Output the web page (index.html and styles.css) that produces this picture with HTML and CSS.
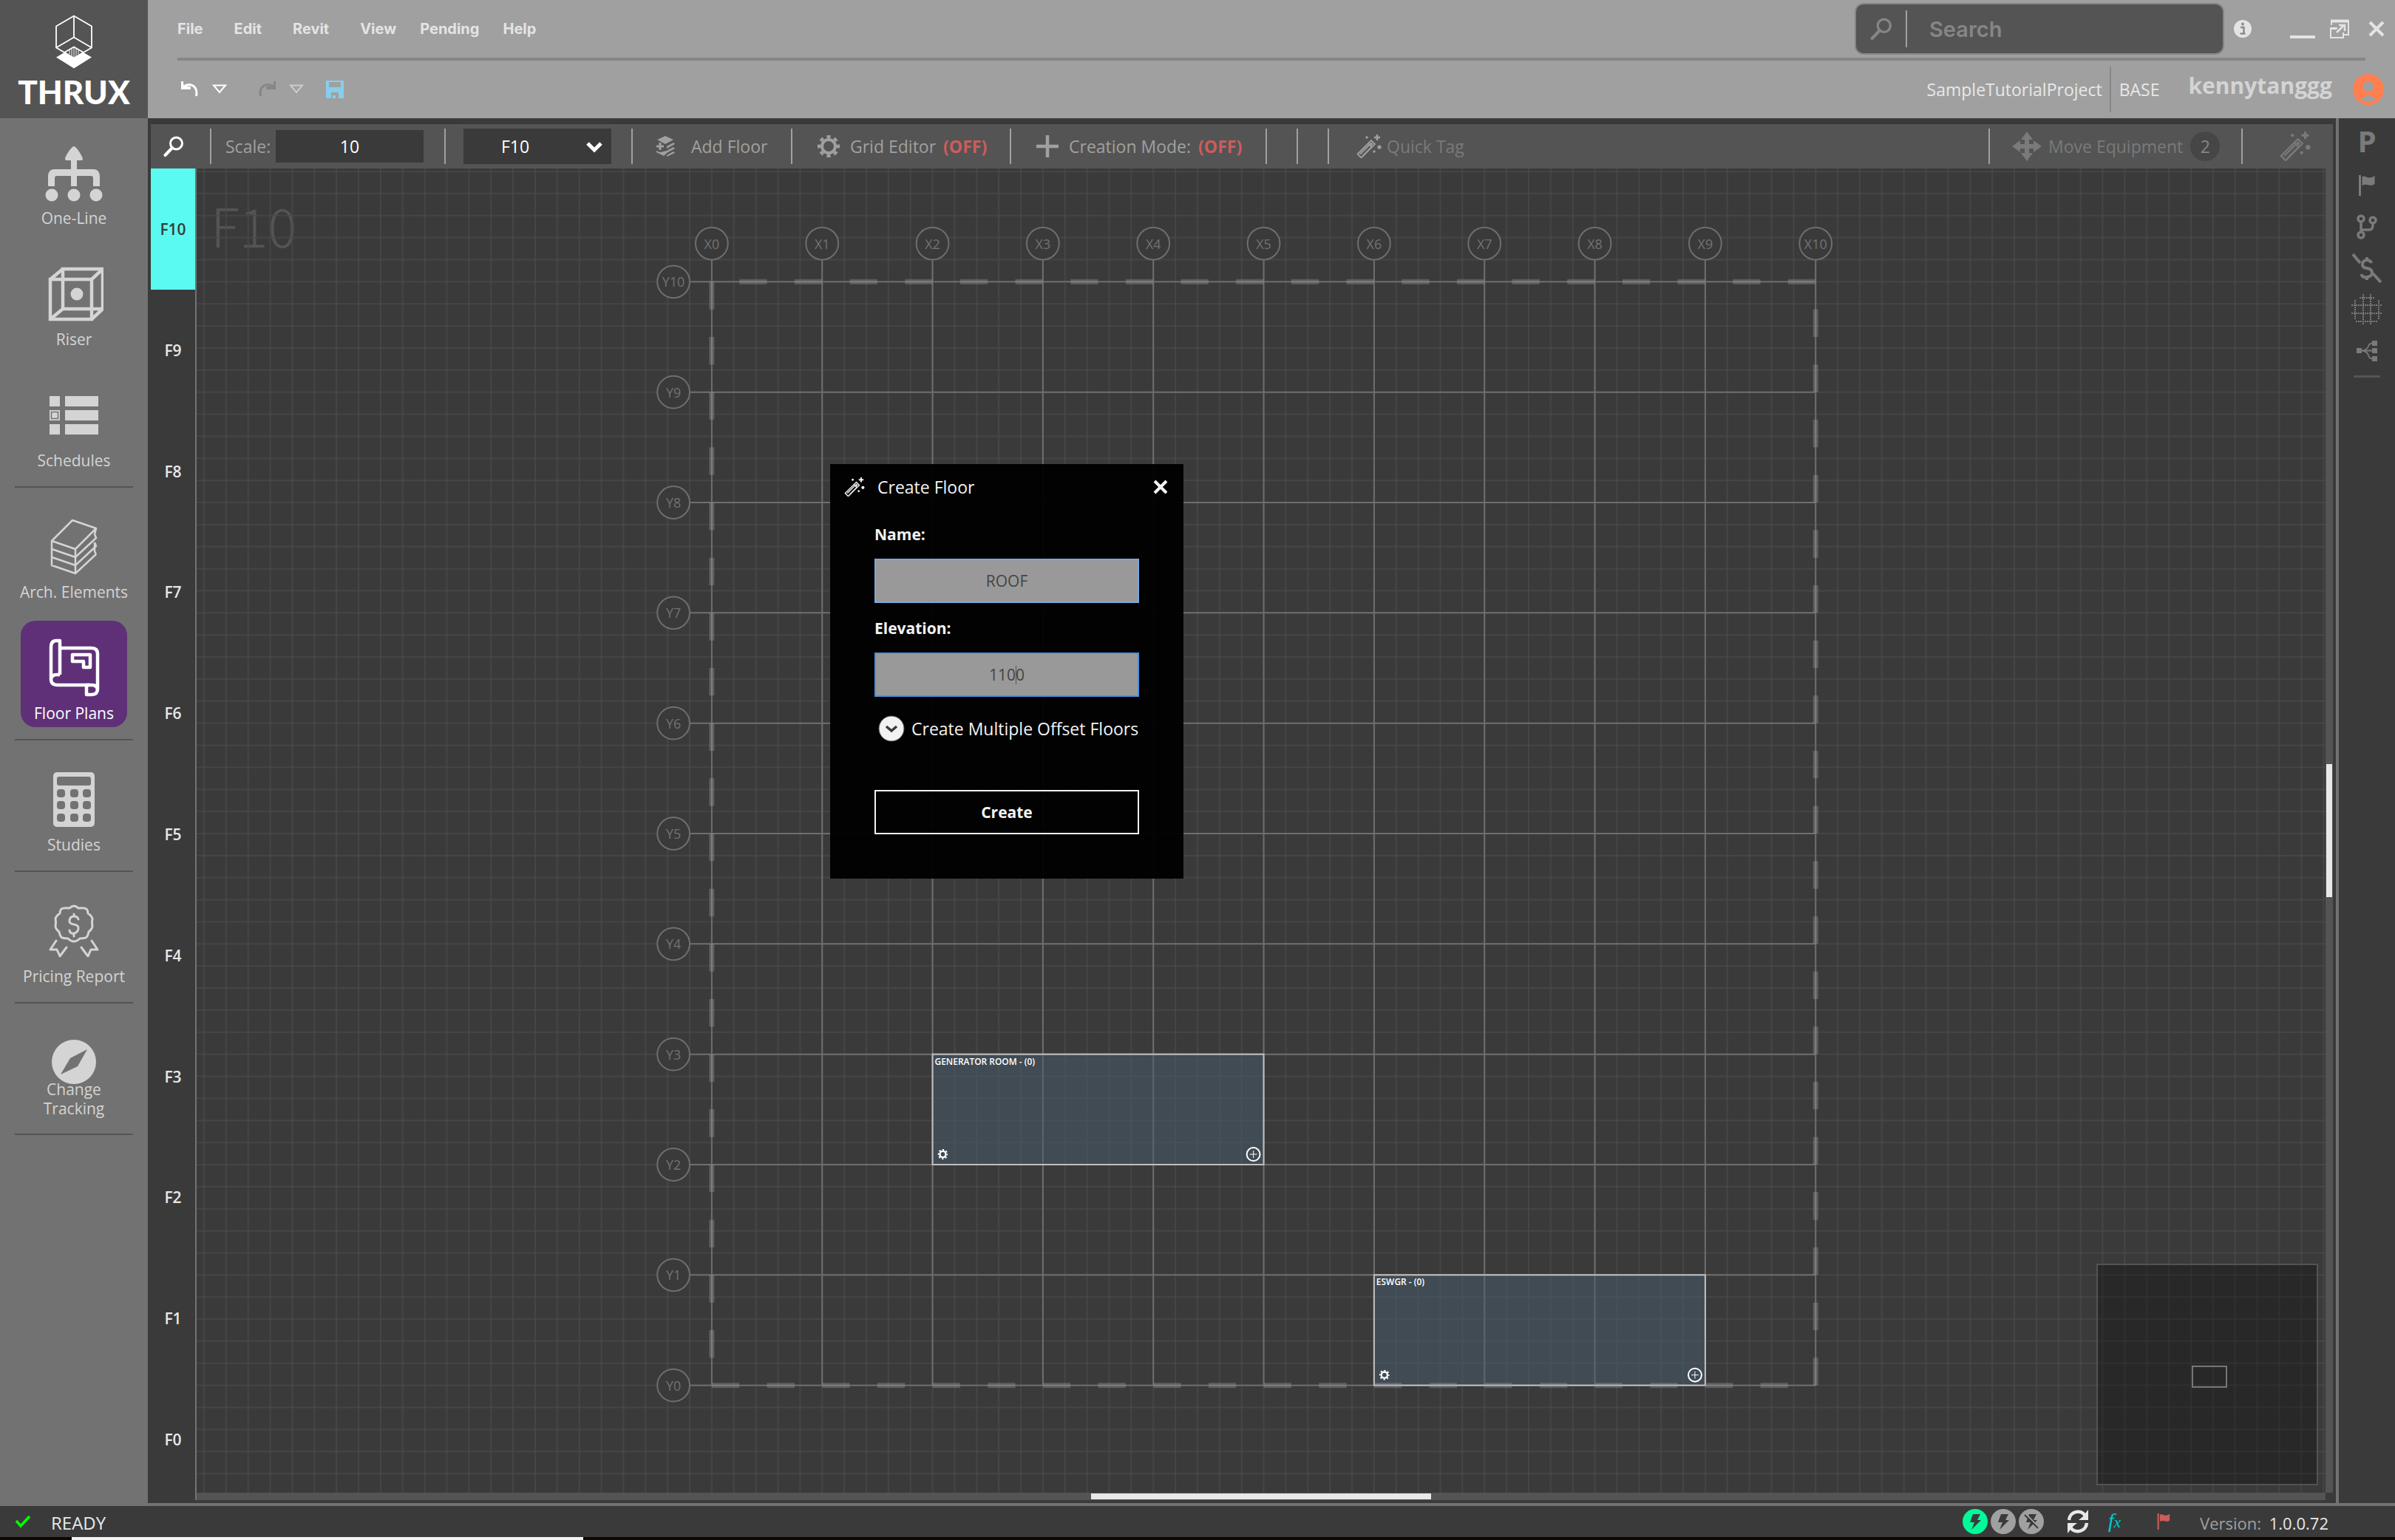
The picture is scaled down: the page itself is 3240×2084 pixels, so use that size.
FILE: index.html
```html
<!DOCTYPE html>
<html lang="en">
<head>
<meta charset="utf-8">
<title>THRUX - Floor Plans</title>
<link rel="stylesheet" href="styles.css">
</head>
<body>
<svg class="defs" aria-hidden="true">
  <symbol id="i-wand" viewBox="0 0 34 32">
    <path d="M1.500 26.500 20 8l5 5L6.500 31.500z M5 26.500 17 14.500M8.500 29 20.500 17M16 12l5 5" fill="none" stroke="currentColor" stroke-width="1.800"/>
    <path d="M19 11.500l2.500 2.500" stroke="currentColor" stroke-width="3"/>
    <path d="M28 0v8M24 4h8" stroke="currentColor" stroke-width="2.600"/>
    <circle cx="14" cy="4" r="1.700" fill="currentColor"/><circle cx="31" cy="17" r="2.600" fill="currentColor"/><circle cx="24" cy="23" r="1.700" fill="currentColor"/>
  </symbol>
  <symbol id="i-search" viewBox="0 0 28 28">
    <circle cx="17.500" cy="10" r="8" fill="none" stroke="currentColor" stroke-width="3"/>
    <path d="M12 16 2.500 26" stroke="currentColor" stroke-width="4" stroke-linecap="round"/>
  </symbol>
  <symbol id="i-gear" viewBox="0 0 30 30">
    <circle cx="15" cy="15" r="9" fill="none" stroke="currentColor" stroke-width="4"/>
    <circle cx="15" cy="15" r="13" fill="none" stroke="currentColor" stroke-width="4" pathLength="16" stroke-dasharray="1" stroke-dashoffset="0.500"/>
  </symbol>
  <symbol id="i-undo" viewBox="0 0 24 22">
    <path d="M3 7.500C12 1 23 6 20.500 20" fill="none" stroke="currentColor" stroke-width="3"/>
    <path d="M0 0l3 0 0.500 6.500 9.500 0.500v4L0 11z" fill="currentColor"/>
  </symbol>
  <symbol id="i-flag" viewBox="0 0 22 28">
    <path d="M1.500 0v28" stroke="currentColor" stroke-width="3"/>
    <path d="M4.500 2c4-2 7 2 10 1.500 3 0 5-1.500 7-2.500v11c-3 2-5 2.500-8 1.500s-5-1.500-9 .5z" fill="currentColor"/>
  </symbol>
  <symbol id="i-bolt" viewBox="0 0 34 34">
    <path d="M14 7h10l-4 8h5L12 28l4-10h-6z" fill="#3a3a3a"/>
  </symbol>
</svg>

<div class="app">
  <header class="header">
    <div class="brand">
      <svg class="brand-mark" viewBox="0 0 50 72">
        <g fill="none" stroke="#fff" stroke-width="1.800">
          <path d="M25 1 49 15v29L25 58 1 44V15zM25 1v29M1 44 25 30l24 14"/>
          <path d="M22 45v11M25 43v14M28 45v11M19 47v6M31 47v6" stroke-width="1"/>
        </g>
        <path d="M13 50 1 57l24 15 24-15-12-7-12 8z" fill="#fff"/>
        <path d="M12 50.500 25 43l13 7.500" fill="none" stroke="#fff" stroke-width="1.800"/>
      </svg>
      <span class="brand-name">THRUX</span>
    </div>
    <div class="header-main">
      <div class="header-row">
        <nav class="menu">
          <button type="button">File</button><button type="button">Edit</button><button type="button">Revit</button><button type="button">View</button><button type="button">Pending</button><button type="button">Help</button>
        </nav>
        <label class="search">
          <svg width="30" height="30"><use href="#i-search"/></svg>
          <input type="text" placeholder="Search" aria-label="Search">
        </label>
        <div class="window-controls">
          <button type="button" aria-label="Info"><svg width="24" height="26" viewBox="0 0 24 26"><circle cx="12" cy="13" r="12" fill="#e4e4e4"/><path d="M9 11h4.500v8M8.500 19.500h7" stroke="#8a8a8a" stroke-width="2.400" fill="none"/><circle cx="12" cy="6.500" r="1.900" fill="#8a8a8a"/></svg></button>
          <button type="button" class="minimize" aria-label="Minimize"><svg width="34" height="26"><path d="M0 24h34" stroke="#e4e4e4" stroke-width="4"/></svg></button>
          <button type="button" class="restore" aria-label="Restore"><svg width="26" height="26" viewBox="0 0 26 26" fill="none" stroke="#e4e4e4"><path d="M2 8V2h23v19h-6" stroke-width="2"/><path d="M1 2.500h24" stroke-width="4"/><path d="M10 12H1v13h17v-7M1 13h8" stroke-width="2"/><path d="M9 18 19 8M12 8h8v8" stroke-width="2.500"/></svg></button>
          <button type="button" class="close" aria-label="Close"><svg width="22" height="22" viewBox="0 0 22 22"><path d="M2 2l18 18M20 2 2 20" stroke="#e4e4e4" stroke-width="4"/></svg></button>
        </div>
      </div>
      <div class="header-rule"></div>
      <div class="header-row">
        <div class="quick">
          <button type="button" aria-label="Undo"><svg width="24" height="22"><use href="#i-undo"/></svg></button>
          <button type="button" aria-label="Undo history"><svg width="20" height="14" viewBox="0 0 20 14"><path d="M2 1.500h16L10 11z" fill="none" stroke="#fff" stroke-width="2"/></svg></button>
          <button type="button" class="redo" aria-label="Redo"><svg width="24" height="22" viewBox="0 0 24 22"><g transform="matrix(-1 0 0 1 24 0)"><use href="#i-undo" width="24" height="22"/></g></svg></button>
          <button type="button" aria-label="Redo history"><svg width="20" height="14" viewBox="0 0 20 14"><path d="M2 1.500h16L10 11z" fill="none" stroke="#ccc" stroke-width="2"/></svg></button>
          <button type="button" class="save" aria-label="Save"><svg width="24" height="24" viewBox="0 0 24 24"><path fill-rule="evenodd" d="M0 0h24v24H0zM4 2v7h16V2zM7 16v8h2v-4h4v4h4v-8z" fill="#87ceeb"/></svg></button>
        </div>
        <div class="project"><span>SampleTutorialProject</span><span class="branch">BASE</span></div>
        <span class="user">kennytanggg</span>
        <svg class="avatar" width="42" height="42" viewBox="0 0 42 42"><circle cx="21" cy="21" r="21" fill="#ff7f50"/><circle cx="21" cy="17" r="7" fill="#a0a0a0"/><path d="M11 34q10-9 20 0-10 8-20 0z" fill="#a0a0a0"/></svg>
      </div>
    </div>
  </header>

  <div class="body">
    <nav class="sidebar">
      <a class="tile" href="#one-line"><svg viewBox="0 0 80 80"><path d="M40 4c3 0 11 12 12 17 0 2-2 2-4 2v0h-4v12h22c7 0 9 5 9 10v13h-9V47q0-3-3-3H44v14h-8V44H17q-3 0-3 3v11H5V45c0-5 2-10 9-10h22V23h-4c-2 0-4 0-4-2 1-5 9-17 12-17z" fill="#d4d4d4"/><circle cx="10" cy="70" r="8.500" fill="#d4d4d4"/><circle cx="40" cy="70" r="8.500" fill="#d4d4d4"/><circle cx="70" cy="70" r="8.500" fill="#d4d4d4"/></svg><span>One-Line</span></a>
      <a class="tile" href="#riser"><svg viewBox="0 0 80 80"><path d="M8 20h56v54H8zM25 6h54v54H25zM8 20 25 6M64 20 79 6M8 74l17-14M64 74l15-14" fill="none" stroke="#d4d4d4" stroke-width="4.500"/><circle cx="44" cy="40" r="8.500" fill="#d4d4d4"/></svg><span>Riser</span></a>
      <a class="tile" href="#schedules"><svg viewBox="0 0 80 80" fill="#d4d4d4"><path d="M7 14h14v14H7zM7 33h14v14H7zM7 52h14v14H7zM28 14h45v14H28zM28 33h45v14H28zM28 52h45v14H28z"/><path d="M9.500 35.500h9v9h-9z" fill="none" stroke="#727272" stroke-width="1.500"/></svg><span>Schedules</span></a>
      <hr>
      <a class="tile" href="#arch"><svg viewBox="0 0 80 80"><path d="M38 4 70 15 42 43 10 32zM10 32v33l32 11 28-26M42 43v33M10 43l32 11 28-26-2-5 2-8M10 54l32 11 28-26-2-5M68 34v12l2 4" fill="none" stroke="#d4d4d4" stroke-width="2.500" stroke-linejoin="round"/></svg><span>Arch. Elements</span></a>
      <a class="tile active" href="#floor-plans"><svg viewBox="0 0 80 80"><g fill="none" stroke="#fff" stroke-width="4.500" stroke-linejoin="round"><path d="M21 49V3h-5q-7 0-7 9v43q0 8 9 8h43M21 49h-4q-8 0-8 7M21 13h43q8 0 8 8v47q0 8-8 8h-7V63"/><path d="M57 63h7q8 0 8 7"/><path d="M38 22h24v17h-9v-8H38z"/></g></svg><span>Floor Plans</span></a>
      <hr>
      <a class="tile" href="#studies"><svg viewBox="0 0 80 80"><rect x="12" y="3" width="56" height="74" rx="5" fill="#d4d4d4"/><g fill="#727272"><rect x="17" y="9" width="46" height="12" rx="3"/><rect x="17" y="26" width="11" height="11" rx="4"/><rect x="35" y="26" width="11" height="11" rx="4"/><rect x="52" y="26" width="11" height="11" rx="4"/><rect x="17" y="42" width="11" height="11" rx="4"/><rect x="35" y="42" width="11" height="11" rx="4"/><rect x="52" y="42" width="11" height="11" rx="4"/><rect x="17" y="59" width="11" height="11" rx="4"/><rect x="35" y="59" width="11" height="11" rx="4"/><rect x="52" y="59" width="11" height="11" rx="4"/></g></svg><span>Studies</span></a>
      <hr>
      <a class="tile" href="#pricing"><svg viewBox="0 0 80 80" fill="none" stroke="#d4d4d4" stroke-width="3" stroke-linejoin="round" stroke-linecap="round"><path d="M40 6q3 0 6 3 8-1 11 1 2 2 2 6 6 4 6 8-1 4 0 9 0 4-5 8-1 6-4 8-4 1-8 1-4 4-8 4t-8-4q-4 0-8-1-3-2-4-8-5-4-5-8 1-5 0-9 0-4 6-8 0-4 2-6 3-2 11-1 3-3 6-3z"/><path d="M46 24q-1-4-6-4t-6 5 6 6 6 6-6 6-6-4M40 17v3M40 43v4"/><path d="M16 53 8 65h9l4 9 9-12M64 53l8 12h-9l-4 9-9-12"/></svg><span>Pricing Report</span></a>
      <hr>
      <a class="tile two-line" href="#changes"><svg viewBox="0 0 80 80"><circle cx="40" cy="39" r="30" fill="#d4d4d4"/><path d="M58 22 45 45 22 56 35 34z" fill="#727272"/></svg><span>Change<br>Tracking</span></a>
      <hr>
    </nav>

    <main class="work">
      <div class="toolbar">
        <div class="seg find"><button type="button" aria-label="Find"><svg width="28" height="28"><use href="#i-search"/></svg></button></div>
        <div class="seg scale"><label for="scale">Scale:</label><input id="scale" type="text" value="10"></div>
        <div class="seg floor"><div class="select"><select aria-label="Floor"><option>F10</option></select><svg width="22" height="18" viewBox="0 0 22 18"><path d="M2 3l9 9 9-9" fill="none" stroke="#fff" stroke-width="5"/></svg></div></div>
        <div class="seg"><button type="button"><svg width="26" height="28" viewBox="0 0 26 28" fill="currentColor"><path d="M13 0 24 5 13 11 2 5z"/><path d="M15 14l9-5 2 2-11 6zM15 20l9-5 2 2-11 6zM15 26l9-5 2 2-11 5z"/><path d="M6 9v10M1 14h10" stroke="currentColor" stroke-width="3"/><path d="M1 20l5 2 9-2v3l-4 4-10-5z"/></svg><span class="after-layers">Add Floor</span></button></div>
        <div class="seg wide"><button type="button"><svg width="30" height="30"><use href="#i-gear"/></svg><span>Grid Editor</span><b>(OFF)</b></button></div>
        <div class="seg wide"><button type="button"><svg width="30" height="30" viewBox="0 0 30 30"><path d="M15 0v30M0 15h30" stroke="currentColor" stroke-width="4.500"/></svg><span>Creation Mode:</span><b>(OFF)</b></button></div>
        <div class="seg"></div>
        <div class="seg"></div>
        <div class="seg tag"><button type="button"><svg width="34" height="32"><use href="#i-wand"/></svg><span>Quick Tag</span></button></div>
        <div class="seg move"><button type="button"><svg width="40" height="40" viewBox="0 0 40 40" fill="currentColor"><path d="M20 0l8 11h-5v6h6v-5l11 8-11 8v-5h-6v6h5l-8 11-8-11h5v-6h-6v5L0 20l11-8v5h6v-6h-5z"/></svg><span>Move Equipment</span><i>2</i></button></div>
        <div class="seg magic"><button type="button" aria-label="Magic"><svg width="42" height="40"><use href="#i-wand"/></svg></button></div>
      </div>

      <div class="plan">
        <nav class="floors">
          <a class="current" href="#f10">F10</a><a href="#f9">F9</a><a href="#f8">F8</a><a href="#f7">F7</a><a href="#f6">F6</a><a href="#f5">F5</a><a href="#f4">F4</a><a href="#f3">F3</a><a href="#f2">F2</a><a href="#f1">F1</a><a href="#f0">F0</a>
        </nav>
        <div class="canvas">
          <svg class="drawing" viewBox="0 0 2893 1800" preserveAspectRatio="xMinYMin slice">
            <defs>
              <pattern id="cells" width="30" height="30" patternUnits="userSpaceOnUse" x="-5" y="-5"><path d="M5 0v30M0 5h30" stroke="#494949" stroke-width="1.500"/></pattern>
            </defs>
            <text class="watermark" x="19" y="107">F10</text>
            <g transform="translate(700 154)">
              <rect x="-700" y="-154" width="2893" height="1800" fill="url(#cells)"/>
              <path class="bays" d="M0-30V1500M150-30V1500M300-30V1500M450-30V1500M600-30V1500M750-30V1500M900-30V1500M1050-30V1500M1200-30V1500M1350-30V1500M1500-30V1500M-30 0H1500M-30 150H1500M-30 300H1500M-30 450H1500M-30 600H1500M-30 750H1500M-30 900H1500M-30 1050H1500M-30 1200H1500M-30 1350H1500M-30 1500H1500"/>
              <g class="markers">
                <circle cx="0" cy="-52" r="22"/><circle cx="150" cy="-52" r="22"/><circle cx="300" cy="-52" r="22"/><circle cx="450" cy="-52" r="22"/><circle cx="600" cy="-52" r="22"/><circle cx="750" cy="-52" r="22"/><circle cx="900" cy="-52" r="22"/><circle cx="1050" cy="-52" r="22"/><circle cx="1200" cy="-52" r="22"/><circle cx="1350" cy="-52" r="22"/><circle cx="1500" cy="-52" r="22"/>
                <circle cx="-52" cy="0" r="22"/><circle cx="-52" cy="150" r="22"/><circle cx="-52" cy="300" r="22"/><circle cx="-52" cy="450" r="22"/><circle cx="-52" cy="600" r="22"/><circle cx="-52" cy="750" r="22"/><circle cx="-52" cy="900" r="22"/><circle cx="-52" cy="1050" r="22"/><circle cx="-52" cy="1200" r="22"/><circle cx="-52" cy="1350" r="22"/><circle cx="-52" cy="1500" r="22"/>
                <text x="0" y="-45">X0</text><text x="150" y="-45">X1</text><text x="300" y="-45">X2</text><text x="450" y="-45">X3</text><text x="600" y="-45">X4</text><text x="750" y="-45">X5</text><text x="900" y="-45">X6</text><text x="1050" y="-45">X7</text><text x="1200" y="-45">X8</text><text x="1350" y="-45">X9</text><text x="1500" y="-45">X10</text>
                <text x="-52" y="7">Y10</text><text x="-52" y="157">Y9</text><text x="-52" y="307">Y8</text><text x="-52" y="457">Y7</text><text x="-52" y="607">Y6</text><text x="-52" y="757">Y5</text><text x="-52" y="907">Y4</text><text x="-52" y="1057">Y3</text><text x="-52" y="1207">Y2</text><text x="-52" y="1357">Y1</text><text x="-52" y="1507">Y0</text>
              </g>
              <g class="room" transform="translate(300 1050)">
                <rect width="450" height="150"/>
                <text x="3" y="14">GENERATOR ROOM - (0)</text>
                <use href="#i-gear" x="7" y="129" width="14" height="14"/>
                <circle cx="14" cy="136" r="4"/>
                <path d="M436 131v10M431 136h10"/><circle cx="436" cy="136" r="9"/>
              </g>
              <g class="room" transform="translate(900 1350)">
                <rect width="450" height="150"/>
                <text x="3" y="14">ESWGR - (0)</text>
                <use href="#i-gear" x="7" y="129" width="14" height="14"/>
                <circle cx="14" cy="136" r="4"/>
                <path d="M436 131v10M431 136h10"/><circle cx="436" cy="136" r="9"/>
              </g>
              <path class="boundary" pathLength="160" d="M0 0V1500H1500V0H0"/>
            </g>
          </svg>
          <div class="minimap"><div class="viewport"></div></div>
          <div class="scroll-y"><span></span></div>
          <div class="scroll-x"><span></span></div>
        </div>
      </div>
    </main>

    <aside class="rail">
      <button type="button" class="letter">P</button>
      <button type="button" aria-label="Flag"><svg width="24" height="28"><use href="#i-flag"/></svg></button>
      <button type="button" aria-label="Branch"><svg width="28" height="34" viewBox="0 0 28 34" fill="none" stroke="currentColor" stroke-width="3.500"><circle cx="6" cy="6" r="4"/><circle cx="22" cy="8" r="4"/><circle cx="6" cy="28" r="4"/><path d="M6 10v14M6 21h11q5 0 5-6v-3"/></svg></button>
      <button type="button" aria-label="Hide prices"><svg width="40" height="40" viewBox="0 0 40 40" fill="none" stroke="currentColor" stroke-width="4"><path d="M1 1l10 12M28 27l11 12"/><path d="M26 13q-1-4-6-4t-6 5 6 6 7 6-7 6-7-4M20 5v4M20 32v4"/></svg></button>
      <button type="button" aria-label="Grid"><svg width="42" height="42" viewBox="0 0 42 42" fill="none" stroke="currentColor" stroke-width="2" stroke-dasharray="2 1"><path d="M16 0v42M26 0v42M0 15h42M0 26h42M5 8v27M37 8v27M11 5h20M6 37h30"/></svg></button>
      <button type="button" aria-label="Hierarchy"><svg width="28" height="28" viewBox="0 0 28 28" fill="currentColor"><path d="M0 10h7v7H0zM21 0h7v7h-7zM21 10h7v7h-7zM21 21h7v7h-7z"/><path d="M6 13.500h16M8 13.500q6-1 8-6 1-4 6-4M8 13.500q6 1 8 6 1 5 6 5" fill="none" stroke="currentColor" stroke-width="1.800"/></svg></button>
      <hr>
    </aside>
  </div>

  <footer class="status">
    <svg width="22" height="18" viewBox="0 0 22 18"><path d="M2 8l6 7L20 2" fill="none" stroke="#0f0" stroke-width="3.500"/></svg>
    <span class="ready">READY</span>
    <div class="power">
      <svg width="34" height="34"><circle cx="17" cy="17" r="17" fill="#00fa9a"/><use href="#i-bolt"/></svg>
      <svg width="34" height="34"><circle cx="17" cy="17" r="17" fill="#a0a0a0"/><use href="#i-bolt"/></svg>
      <svg width="34" height="34"><circle cx="17" cy="17" r="17" fill="#a0a0a0"/><use href="#i-bolt"/><path d="M11 8l17 18" stroke="#a0a0a0" stroke-width="2"/><path d="M8 8l18 18" stroke="#3a3a3a" stroke-width="2"/></svg>
    </div>
    <svg class="sync" width="30" height="32" viewBox="0 0 30 32"><path d="M3 14C4 2 19-1 25 8M27 18C26 30 11 33 5 24" fill="none" stroke="#e8e8e8" stroke-width="4.500"/><path d="M29 0v14H16l5-4 4-5zM1 32V18h13l-5 4-4 5z" fill="#e8e8e8"/></svg>
    <span class="fx">f<small>x</small></span>
    <svg class="alert" width="18" height="22" viewBox="0 0 22 28"><use href="#i-flag" width="22" height="28"/></svg>
    <span class="version">Version: <b>1.0.0.72</b></span>
  </footer>
  <div class="taskbar"><span></span></div>
</div>

<form class="dialog">
  <div class="dialog-title"><svg width="28" height="26"><use href="#i-wand"/></svg><h2>Create Floor</h2><button type="button" aria-label="Close"><svg width="20" height="20" viewBox="0 0 20 20"><path d="M2 2l16 16M18 2 2 18" stroke="#f4f4f4" stroke-width="4"/></svg></button></div>
  <label for="name">Name:</label>
  <input id="name" type="text" value="ROOF">
  <label for="elevation">Elevation:</label>
  <div class="field"><input id="elevation" class="focused" type="text" value="1100"><i class="caret"></i></div>
  <button type="button" class="expand"><svg width="36" height="36" viewBox="0 0 36 36"><circle cx="18" cy="18" r="17" fill="#f2f2f2" stroke="#555" stroke-width="1"/><path d="M11 15l7 6 7-6" fill="none" stroke="#3a3a3a" stroke-width="3.500"/></svg>Create Multiple Offset Floors</button>
  <button type="button" class="create">Create</button>
</form>
</body>
</html>
```

FILE: styles.css
```css
* { box-sizing: border-box; }

body {
  margin: 0;
  background: #3a3a3a;
  color: #d4d4d4;
  font: 23px/28px "Open Sans", "Noto Sans", sans-serif;
}

button {
  display: flex;
  align-items: center;
  margin: 0;
  padding: 0;
  border: 0;
  background: none;
  color: inherit;
  font: inherit;
}

input, select {
  border: 0;
  border-radius: 0;
  font: inherit;
  text-align: center;
  outline: 0;
}

a { color: inherit; text-decoration: none; }
svg { display: block; flex: none; }
hr { margin: 0; border: 0; }
.defs { position: absolute; width: 0; height: 0; }

.app {
  display: flex;
  flex-direction: column;
  height: 100vh;
}

/* Header */
.header { display: flex; flex: none; background: #a0a0a0; }

.brand {
  display: flex;
  flex-direction: column;
  align-items: center;
  width: 200px;
  padding-top: 20px;
  background: #545454;
}
.brand-mark { width: 50px; height: 73px; }
.brand-name {
  margin-top: 5px;
  color: #fff;
  font: 900 44px/52px Lato, sans-serif;
}

.header-main { flex: 1; padding-left: 40px; }
.header-row { display: flex; align-items: center; height: 78px; }
.header-rule { height: 4px; margin-right: 40px; background: #868686; }

.menu {
  display: flex;
  gap: 32px;
  margin-right: auto;
  color: #e4e4e4;
  font: 700 20px/28px Inter, sans-serif;
}
.menu button:nth-child(-n+3) { margin-right: 10px; }

.search {
  display: flex;
  align-items: center;
  width: 500px;
  height: 70px;
  padding-left: 19px;
  border: 2px solid #868686;
  border-radius: 12px;
  background: #545454;
  color: #868686;
}
.search input {
  flex: 1;
  min-width: 0;
  height: 50px;
  margin-left: 18px;
  padding: 0 0 0 30px;
  border-left: 2px solid #a0a0a0;
  background: none;
  color: #868686;
  font: 600 29px/36px Inter, sans-serif;
  text-align: left;
}
.search input::placeholder { color: #868686; opacity: 1; }

.window-controls { display: flex; align-items: center; padding: 0 14px 0 13px; }
.minimize { margin-left: 52px; }
.restore { margin-left: 20px; }
.close { margin-left: 26px; }

.quick { display: flex; align-items: center; margin-right: auto; padding-left: 5px; color: #fff; }
.quick button + button { margin-left: 18px; }
.quick .redo { margin-left: 42px; color: #868686; }
.quick .save { margin-left: 30px; }

.project { display: flex; align-items: center; color: #e8e8e8; line-height: 62px; }
.branch { margin-left: 10px; padding-left: 11px; border-left: 2px solid #868686; }
.user { margin: 0 28px 10px 39px; color: #d4d4d4; font-weight: 700; font-size: 30px; line-height: 40px; }
.avatar { margin-right: 15px; }

/* Main area */
.body { display: flex; flex: 1; min-height: 0; border-bottom: 4px solid #727272; }

.sidebar { flex: none; width: 200px; background: #727272; }
.tile {
  display: flex;
  flex-direction: column;
  align-items: center;
  width: 144px;
  height: 144px;
  margin: 10px 28px 20px;
  padding-top: 24px;
  border-radius: 20px;
  font-size: 21px;
  line-height: 26px;
  text-align: center;
  white-space: nowrap;
}
.tile + .tile { margin-top: 0; }
.tile:has(+ hr) { margin-bottom: 16px; }
.tile svg { width: 80px; height: 80px; }
.tile span { margin-top: 8px; }
.tile.two-line span { margin-top: -17px; }
.tile.active { background: #5f3078; color: #fff; }
.sidebar hr { height: 2px; margin: 0 20px 16px; background: #545454; }

.work { display: flex; flex: 1; flex-direction: column; min-width: 0; padding: 8px 4px 4px; }

/* Toolbar */
.toolbar {
  display: grid;
  grid-template-columns: 80px 317px 253px 216px 296px 346px 42px 42px 1fr 342px 124px;
  align-items: center;
  height: 60px;
  background: #545454;
  color: #a0a0a0;
  white-space: nowrap;
}
.seg {
  display: flex;
  align-items: center;
  height: 48px;
  padding-left: 31px;
  border-left: 2px solid #a0a0a0;
}
.seg span { margin-left: 14px; }
.seg .after-layers { margin-left: 22px; }
.seg b { margin-left: 10px; color: #cd5c5c; }
.find { padding-left: 17px; border: 0; color: #fff; }
.scale { padding-left: 19px; }
.scale label { width: 60px; }
.scale input {
  width: 200px;
  height: 44px;
  margin-left: 8px;
  background: #3a3a3a;
  color: #fff;
}
.floor { padding-left: 24px; }
.select { position: relative; }
.select select {
  width: 200px;
  height: 48px;
  padding: 0 60px 0 0;
  background: #3a3a3a;
  color: #fff;
  appearance: none;
  text-align-last: center;
}
.select svg { position: absolute; top: 17px; right: 12px; }
.wide { padding-left: 34px; }
.tag { padding-left: 37px; }
.tag span { margin-left: 7px; color: #7a7a7a; }
.move { padding-left: 30px; color: #7a7a7a; }
.move span { margin-left: 9px; }
.move i {
  width: 40px;
  margin-left: 10px;
  border-radius: 20px;
  background: #464646;
  color: #868686;
  font-style: normal;
  line-height: 40px;
}
.magic { padding-left: 50px; color: #7a7a7a; }

/* Floor plan */
.plan { display: flex; flex: 1; min-height: 0; }
.floors {
  display: flex;
  flex: none;
  flex-direction: column;
  width: 62px;
  border-right: 2px solid #727272;
  color: #e8e8e8;
  font-weight: 600;
  font-size: 21px;
}
.floors a { display: flex; flex: 1; align-items: center; justify-content: center; }
.floors .current { background: #5afaf0; color: #3a3a3a; }

.canvas {
  display: grid;
  grid-template: 1fr 10px / 1fr 10px;
  flex: 1;
  position: relative;
  min-width: 0;
}
.drawing { width: 100%; height: 100%; min-height: 0; }
.watermark { fill: #545454; font: 200 73px "Noto Sans CJK JP", "Open Sans", sans-serif; }
.bays { stroke: #6e6e6e; stroke-width: 2; }
.markers circle { fill: #3a3a3a; stroke: #6e6e6e; stroke-width: 2; }
.markers text { fill: #727272; font-size: 18px; text-anchor: middle; }
.boundary { fill: none; stroke: rgba(160, 160, 160, 0.35); stroke-width: 7; stroke-dasharray: 1; }
.room { color: #fff; }
.room rect { fill: rgba(72, 92, 110, 0.5); stroke: #c0c0c0; stroke-width: 2; }
.room text { fill: #fff; font-size: 12px; font-weight: 600; }
.room path, .room circle { fill: none; stroke: currentColor; stroke-width: 2; }
.room path { stroke-width: 1; }

.minimap {
  position: absolute;
  right: 20px;
  bottom: 20px;
  width: 300px;
  height: 300px;
  border: 2px solid #535353;
  background: rgba(0, 0, 0, 0.3);
}
.viewport {
  position: absolute;
  top: 46%;
  left: 43%;
  width: 16%;
  height: 10%;
  border: 2px solid #777;
}

.scroll-y, .scroll-x { display: grid; background: #545454; }
.scroll-y { grid-template-rows: 45fr 10fr 45fr; padding: 0 1px; }
.scroll-x { grid-template-columns: 42fr 16fr 42fr; padding: 1px 0; }
.scroll-y span { grid-row: 2; background: #e8e8e8; }
.scroll-x span { grid-column: 2; background: #e8e8e8; }

/* Right rail */
.rail {
  display: flex;
  flex: none;
  flex-direction: column;
  align-items: center;
  width: 80px;
  padding-top: 3px;
  border-left: 4px solid #727272;
  color: #7a7a7a;
}
.rail button { justify-content: center; height: 56px; }
.rail .letter { height: 60px; padding-bottom: 4px; font-weight: 700; font-size: 40px; }
.rail hr { width: 36px; height: 3px; margin-top: 5px; background: #545454; }

/* Status bar */
.status { display: flex; flex: none; align-items: center; height: 42px; padding: 0 90px 0 20px; }
.ready { margin: 4px auto 0 27px; color: #e8e8e8; font-size: 24px; }
.power { display: flex; gap: 4px; }
.sync { margin-left: 31px; }
.fx { width: 24px; margin-left: 26px; color: #00ced1; font: italic 28px/30px "Liberation Serif", serif; }
.fx small { font-size: 21px; }
.alert { margin-left: 42px; color: #cd5c5c; }
.version { margin: 4px 0 0 40px; color: #a0a0a0; font-size: 22px; }
.version b { margin-left: 5px; color: #e8e8e8; font-weight: 400; }

.taskbar { flex: none; height: 4px; padding-left: 3%; background: #0c0806; }
.taskbar span { display: block; width: 22%; height: 4px; background: #f2f2f2; }

/* Create floor dialog, floating over the plan */
.dialog {
  position: absolute;
  top: 628px;
  left: 1123px;
  display: flex;
  flex-direction: column;
  width: 478px;
  padding: 0 60px 60px;
  background: rgba(0, 0, 0, 0.96);
  color: #f2f2f2;
}
.dialog-title { display: flex; align-items: center; height: 62px; margin: 0 -41px 17px; }
.dialog-title h2 { flex: 1; margin: 0 0 0 17px; font-weight: 400; font-size: 23px; }
.dialog-title button { margin-right: 2px; }
.dialog label { height: 32px; margin-bottom: 17px; font-weight: 700; font-size: 21px; line-height: 32px; }
.dialog input {
  width: 100%;
  height: 60px;
  margin-bottom: 18px;
  border: 2px solid #76a9e0;
  background: #999;
  color: #444;
  font-size: 21px;
}
.dialog .focused { border-color: #4a90e2; }
.field { position: relative; }
.caret { position: absolute; top: 18px; left: calc(50% + 12px); width: 1px; height: 25px; background: #555; }
.expand { gap: 9px; height: 50px; margin-left: 5px; white-space: nowrap; }
.create {
  justify-content: center;
  height: 60px;
  margin-top: 58px;
  border: 2px solid #f2f2f2;
  font-weight: 700;
  font-size: 21px;
}
```
